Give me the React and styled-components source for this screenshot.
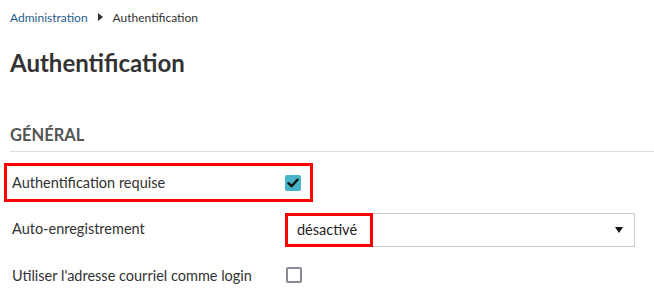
import React from "react";
import styled, { createGlobalStyle } from "styled-components";

const GlobalStyle = createGlobalStyle`
  body {
    margin: 0;
    background: #fff;
    font-family: Lato, "Open Sans", sans-serif;
    color: #333;
  }
`;

const Page = styled.div`
  padding: 0 0 0 10px;
  width: 644px;
`;

const Breadcrumb = styled.nav`
  display: flex;
  align-items: center;
  height: 34px;
  font-size: 12px;
  color: #333;
  a {
    color: #1f5d8c;
    text-decoration: none;
  }
`;

const Caret = styled.span`
  display: inline-block;
  width: 0;
  height: 0;
  margin: 0 10px 0 10px;
  border-top: 4px solid transparent;
  border-bottom: 4px solid transparent;
  border-left: 5px solid #333;
`;

const Title = styled.h1`
  margin: 13px 0 0;
  font-size: 24px;
  font-weight: 700;
  line-height: 32px;
  color: #333;
`;

const SectionTitle = styled.h2`
  margin: 46px 0 0;
  padding-bottom: 6px;
  font-size: 16.5px;
  font-weight: 700;
  line-height: 20px;
  text-transform: uppercase;
  color: #555;
  border-bottom: 1px solid #ddd;
`;

const Row = styled.div`
  display: grid;
  grid-template-columns: 275px 350px;
  align-items: center;
  height: ${(p) => p.$h}px;
  margin-top: ${(p) => p.$top || 0}px;
`;

const Marked = styled.div`
  display: grid;
  grid-template-columns: 274px 24px;
  align-items: center;
  box-sizing: border-box;
  margin-left: -6px;
  padding-left: 3px;
  width: 309px;
  height: 39px;
  border: 3px solid #f00;
`;

const Label = styled.span`
  padding-left: 2px;
  margin-bottom: ${(p) => p.$raise || 0}px;
  font-size: 14.5px;
  color: #333;
`;

const Box = styled.span`
  display: inline-flex;
  align-items: center;
  justify-content: center;
  box-sizing: border-box;
  width: 16px;
  height: 16px;
  border-radius: 2px;
  margin-left: 1px;
  background: ${(p) => (p.$checked ? "#45b4c7" : "#fff")};
  border: ${(p) => (p.$checked ? "none" : "2px solid #8b8894")};
`;

const Select = styled.div`
  display: flex;
  align-items: center;
  justify-content: space-between;
  box-sizing: border-box;
  height: 34px;
  border: 1px solid #ccc;
  font-size: 14.5px;
  color: #222;
`;

const Value = styled.span`
  display: flex;
  align-items: center;
  box-sizing: border-box;
  height: 34px;
  margin: -1px 0 0 -1px;
  padding: 0 9px;
  width: 88px;
  border: 3px solid #f00;
`;

const Arrow = styled.span`
  width: 0;
  height: 0;
  margin-right: 11px;
  border-left: 4px solid transparent;
  border-right: 4px solid transparent;
  border-top: 6px solid #111;
`;

const Check = () => (
  <svg width="12" height="10" viewBox="0 0 12 10">
    <path d="M1.5 5.2 L4.5 8.2 L10.5 1.8" fill="none" stroke="#111" strokeWidth="2.4" strokeLinecap="round" strokeLinejoin="round" />
  </svg>
);

export default function App() {
  return (
    <Page>
      <GlobalStyle />
      <Breadcrumb>
        <a href="#">Administration</a>
        <Caret />
        <span>Authentification</span>
      </Breadcrumb>
      <Title>Authentification</Title>
      <SectionTitle>Général</SectionTitle>
      <Row $h={39} $top={11}>
        <Marked>
          <Label>Authentification requise</Label>
          <Box $checked>
            <Check />
          </Box>
        </Marked>
      </Row>
      <Row $h={34} $top={11}>
        <Label $raise={4}>Auto-enregistrement</Label>
        <Select>
          <Value>désactivé</Value>
          <Arrow />
        </Select>
      </Row>
      <Row $h={56}>
        <Label>Utiliser l'adresse courriel comme login</Label>
        <Box />
      </Row>
    </Page>
  );
}
